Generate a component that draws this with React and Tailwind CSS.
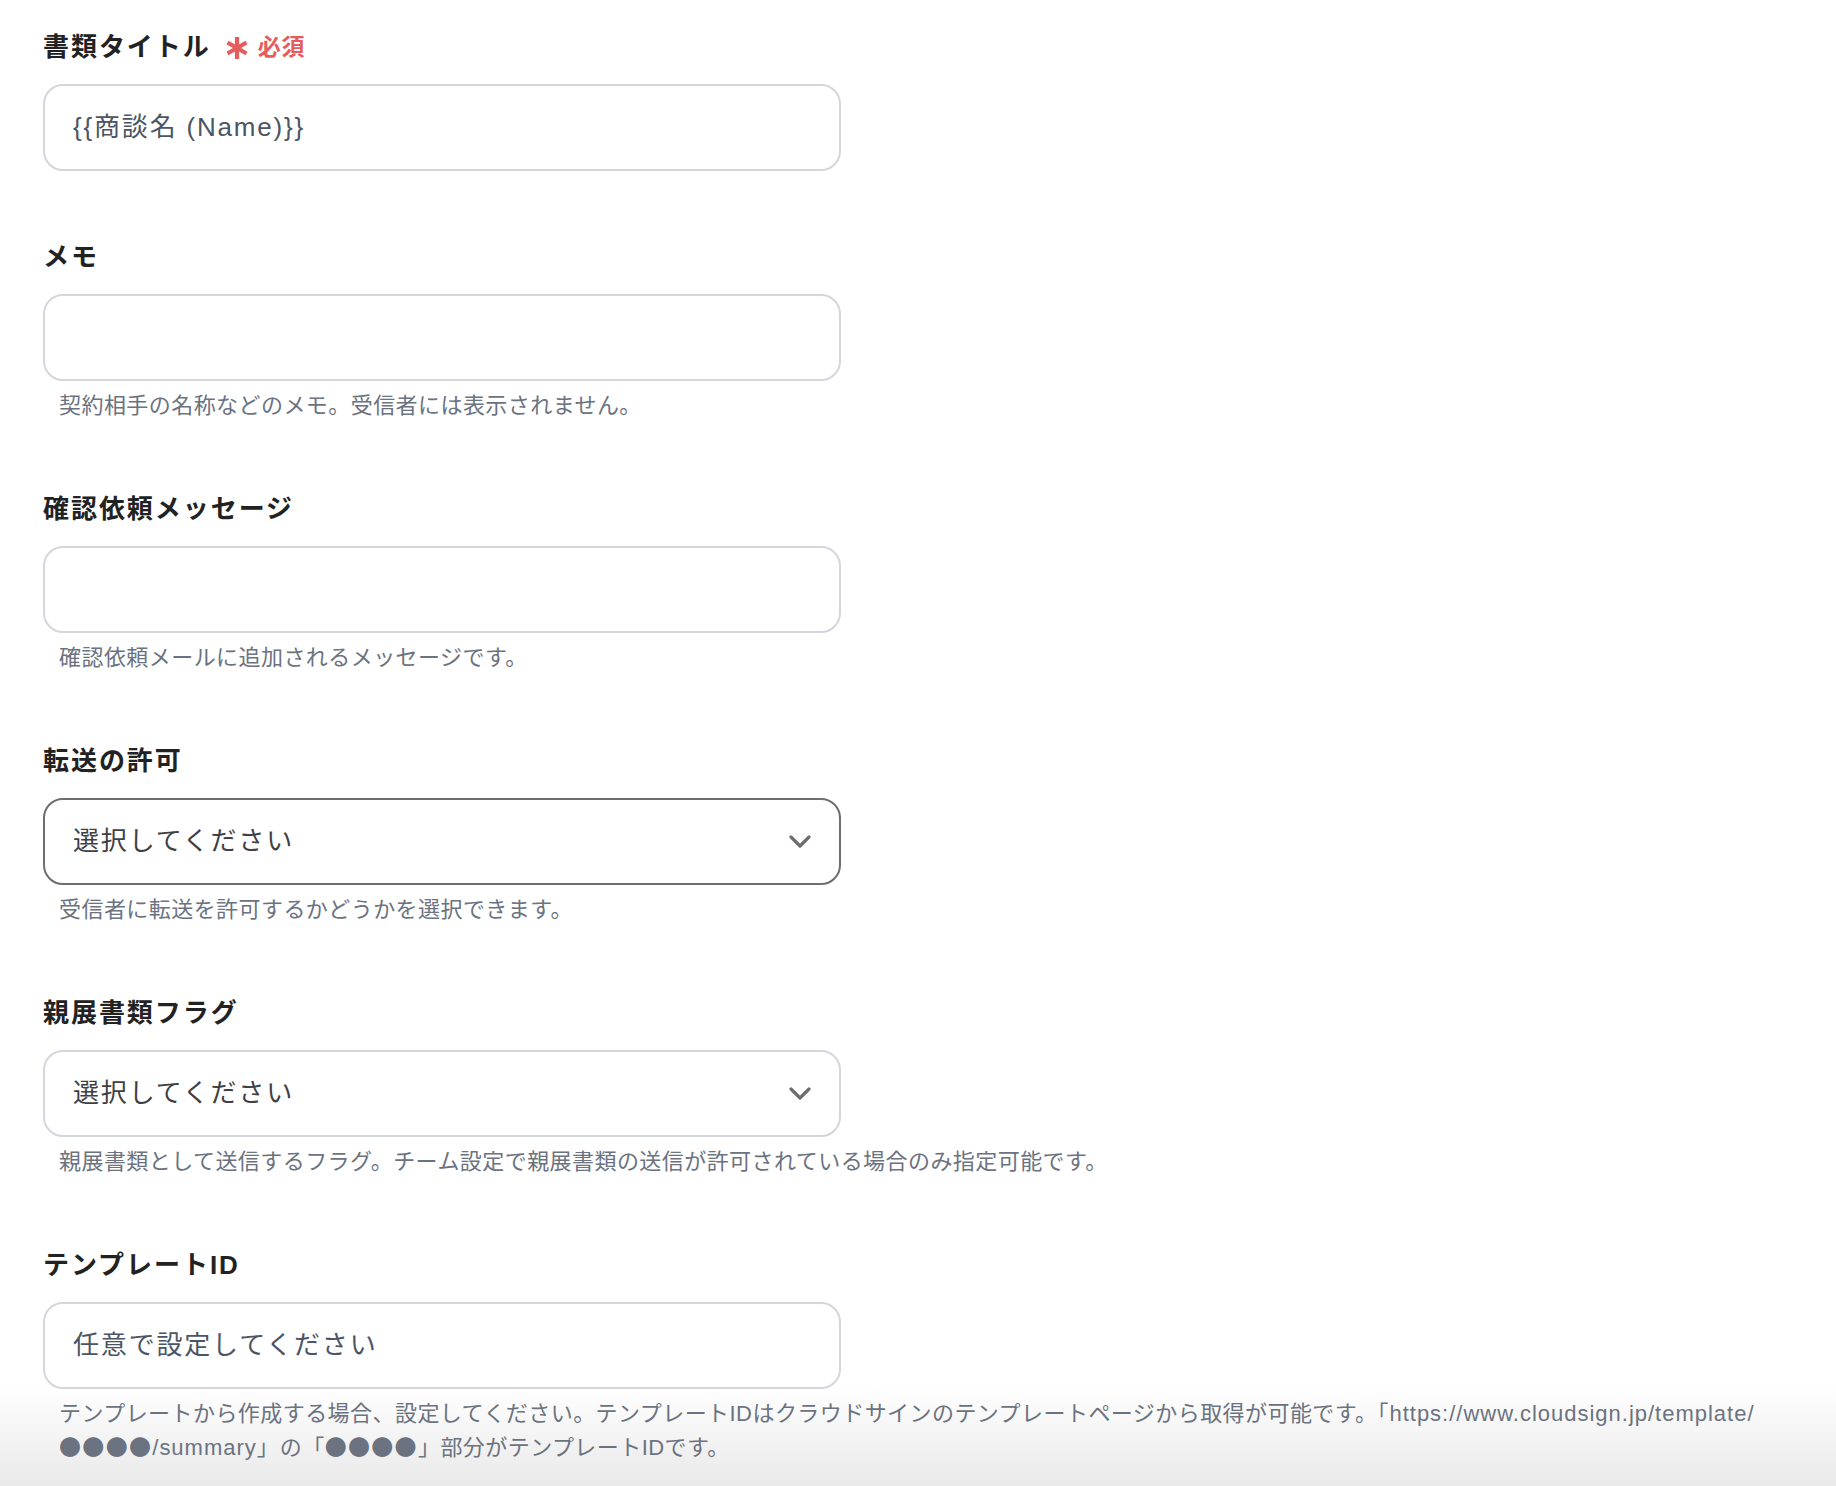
import React from 'react';

const Dots = () => (
  <span className="font-['Noto_Sans_CJK_JP',sans-serif] leading-none tracking-[0.06em] text-[#6b7280]">●●●●</span>
);

const fields = [
  { id: 'title', label: '書類タイトル', required: true, type: 'input', value: '{{商談名 (Name)}}' },
  { id: 'memo', label: 'メモ', type: 'input', help: '契約相手の名称などのメモ。受信者には表示されません。' },
  { id: 'message', label: '確認依頼メッセージ', type: 'input', help: '確認依頼メールに追加されるメッセージです。' },
  { id: 'forward', label: '転送の許可', type: 'select', focused: true, help: '受信者に転送を許可するかどうかを選択できます。' },
  {
    id: 'sealed',
    label: '親展書類フラグ',
    type: 'select',
    help: '親展書類として送信するフラグ。チーム設定で親展書類の送信が許可されている場合のみ指定可能です。',
  },
  {
    id: 'template',
    label: 'テンプレートID',
    type: 'input',
    value: '任意で設定してください',
    help: (
      <>
        <span className="whitespace-nowrap">
          テンプレートから作成する場合、設定してください。テンプレートIDはクラウドサインのテンプレートページから取得が可能です。
          <span className="tracking-[0.045em]">「https://www.cloudsign.jp/template/</span>
        </span>
        <br />
        <Dots />
        <span className="tracking-[0.045em]">/summary」</span>の「<Dots />」部分がテンプレートIDです。
      </>
    ),
  },
];

const RequiredMark = () => (
  <span className="ml-[14px] flex items-center gap-[9px] text-[23px] font-bold tracking-[0.04em] text-[#e65c5c]">
    <svg width="24" height="24" viewBox="0 0 24 24" className="mt-[1px]">
      <g stroke="#e65c5c" strokeWidth="4.2" strokeLinecap="butt">
        <line x1="12" y1="1" x2="12" y2="23" />
        <line x1="2.5" y1="6.5" x2="21.5" y2="17.5" />
        <line x1="2.5" y1="17.5" x2="21.5" y2="6.5" />
      </g>
    </svg>
    必須
  </span>
);

const Chevron = () => (
  <svg width="22" height="14" viewBox="0 0 22 14" className="shrink-0">
    <path d="M2 2 L11 11 L20 2" fill="none" stroke="#6e6e6e" strokeWidth="3.2" strokeLinecap="round" strokeLinejoin="round" />
  </svg>
);

const Field = ({ field }) => {
  const boxBorder = field.focused ? 'border-[#6e6e6e]' : 'border-[#d3d7dc]';
  return (
    <div className="mb-[68px] last:mb-0">
      <div className="flex h-[36px] items-center">
        <span className="text-[26px] font-bold tracking-[0.075em] text-[#222222]">{field.label}</span>
        {field.required && <RequiredMark />}
      </div>
      <div
        className={`mt-[19px] flex h-[87px] w-[798px] items-center justify-between rounded-[20px] border-2 bg-white pl-[28px] pr-[28px] ${boxBorder}`}
      >
        <span className={`text-[26px] tracking-[0.07em] ${field.type === 'select' ? 'text-[#3f3f46]' : 'text-[#4b5563]'}`}>
          {field.type === 'select' ? '選択してください' : field.value || ''}
        </span>
        {field.type === 'select' && <Chevron />}
      </div>
      {field.help && (
        <p className="mt-[8px] pl-[16px] text-[22px] leading-[34px] tracking-[0.02em] text-[#6b7280]">{field.help}</p>
      )}
    </div>
  );
};

export default function App() {
  return (
    <div className="relative h-[1486px] overflow-hidden bg-white font-['Liberation_Sans','Noto_Sans_CJK_JP',sans-serif]">
      {/* bottom fade, sits behind the form */}
      <div className="pointer-events-none absolute inset-x-0 bottom-0 h-[100px] bg-linear-to-b from-white/0 to-[#e9e9e9]" />
      <div className="relative px-[43px] pt-[29px]">
        {fields.map((f) => (
          <Field key={f.id} field={f} />
        ))}
      </div>
    </div>
  );
}
